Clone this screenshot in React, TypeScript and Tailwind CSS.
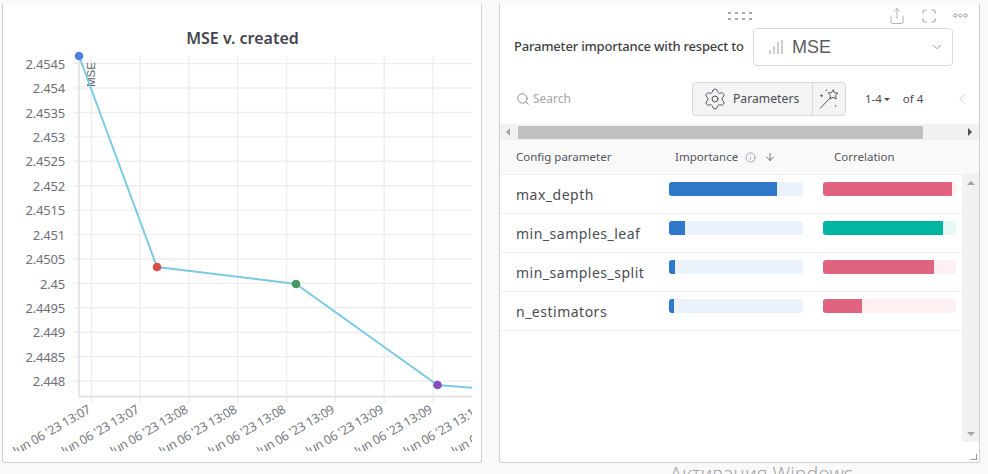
import { ArrowDown, ChevronDown, ChevronLeft, Info, Search, Settings, Share } from 'lucide-react'

const font = '"Noto Sans", sans-serif'

const yTicks = [
  '2.4545', '2.454', '2.4535', '2.453', '2.4525', '2.452', '2.4515',
  '2.451', '2.4505', '2.45', '2.4495', '2.449', '2.4485', '2.448',
]

const xTicks = [
  { x: 91.5, label: "Jun 06 '23 13:07" },
  { x: 140, label: "Jun 06 '23 13:07" },
  { x: 188.7, label: "Jun 06 '23 13:08" },
  { x: 237.6, label: "Jun 06 '23 13:08" },
  { x: 286.5, label: "Jun 06 '23 13:08" },
  { x: 335.3, label: "Jun 06 '23 13:09" },
  { x: 384.2, label: "Jun 06 '23 13:09" },
  { x: 433, label: "Jun 06 '23 13:09" },
  { x: 481.8, label: "Jun 06 '23 13:10" },
  { x: 530, label: "Jun 06 '23 13:10" },
]

const dots = [
  { x: 79, y: 56, fill: '#4f80e1' },
  { x: 157, y: 267, fill: '#da4c4c' },
  { x: 296, y: 284, fill: '#479a5f' },
  { x: 437.5, y: 385, fill: '#8150b8' },
]

const params = [
  { name: 'max_depth', imp: 108, corr: 129, tone: 'red' },
  { name: 'min_samples_leaf', imp: 16, corr: 120, tone: 'green' },
  { name: 'min_samples_split', imp: 6, corr: 111, tone: 'red' },
  { name: 'n_estimators', imp: 5, corr: 39, tone: 'red' },
]

function Chart() {
  return (
    <svg className="block w-[478px] h-[457px]" viewBox="3 4 478 457" style={{ fontFamily: font }}>
      <defs>
        <clipPath id="plot">
          <rect x="3" y="40" width="469" height="358" />
        </clipPath>
        <clipPath id="xlabels">
          <rect x="3" y="398" width="469" height="53" />
        </clipPath>
      </defs>
      <text x="242.5" y="43.5" textAnchor="middle" fontSize="16" fontWeight="600" fill="#45454d">
        MSE v. created
      </text>
      {yTicks.map((t, i) => {
        const y = 63.6 + i * 24.42
        return (
          <g key={t}>
            <line x1="73" x2="472" y1={y} y2={y} stroke="#eeeef0" strokeWidth="1.4" />
            <text x="65" y={y + 5.2} textAnchor="end" fontSize="13" letterSpacing="-0.2" fill="#6f6f78">
              {t}
            </text>
          </g>
        )
      })}
      {xTicks.slice(0, 8).map((t) => (
        <line key={t.x} x1={t.x} x2={t.x} y1="56" y2="403" stroke="#eeeef0" strokeWidth="1.4" />
      ))}
      <line x1="79" x2="79" y1="56" y2="397" stroke="#e4e4e6" strokeWidth="1.8" />
      <line x1="79" x2="472" y1="396.5" y2="396.5" stroke="#e4e4e6" strokeWidth="1.8" />
      <g clipPath="url(#xlabels)">
        {xTicks.map((t) => (
          <text
            key={t.x}
            x={t.x}
            y="412"
            textAnchor="end"
            fontSize="12.5"
            letterSpacing="-0.3"
            fill="#77777f"
            transform={`rotate(-30 ${t.x} 412)`}
          >
            {t.label}
          </text>
        ))}
      </g>
      <text
        x="95"
        y="87"
        fontSize="11.5"
        fill="#5f5f68"
        fontFamily="Liberation Sans, sans-serif"
        transform="rotate(-90 95 87)"
      >
        MSE
      </text>
      <g clipPath="url(#plot)">
        <polyline
          points="79,56 157,267 296,284 437.5,385 480,388.5"
          fill="none"
          stroke="#7ccbe4"
          strokeWidth="2"
        />
      </g>
      {dots.map((d) => (
        <circle key={d.x} cx={d.x} cy={d.y} r="4.3" fill={d.fill} />
      ))}
    </svg>
  )
}

function BarsIcon() {
  return (
    <svg width="14" height="16" viewBox="0 0 14 16" stroke="#a9a9ae" strokeWidth="1.2">
      <line x1="1" x2="1" y1="11" y2="15" />
      <line x1="5" x2="5" y1="7" y2="15" />
      <line x1="9" x2="9" y1="3" y2="15" />
      <line x1="13" x2="13" y1="1" y2="15" />
    </svg>
  )
}

function CornersIcon() {
  return (
    <svg width="14" height="14" viewBox="0 0 14 14" fill="none" stroke="#a9a9ad" strokeWidth="1.2">
      <path d="M1 4.5V2.5Q1 1 2.5 1H4.5M9.5 1H11.5Q13 1 13 2.5V4.5M13 9.5V11.5Q13 13 11.5 13H9.5M4.5 13H2.5Q1 13 1 11.5V9.5" />
    </svg>
  )
}

function DotsIcon() {
  return (
    <svg width="15" height="5" viewBox="0 0 15 5" fill="none" stroke="#8e8e92" strokeWidth="0.9">
      <circle cx="2.3" cy="2.5" r="1.6" />
      <circle cx="7.5" cy="2.5" r="1.6" />
      <circle cx="12.7" cy="2.5" r="1.6" />
    </svg>
  )
}

function WandIcon() {
  return (
    <svg width="22" height="22" viewBox="0 0 20 20" fill="none" stroke="#56565c" strokeWidth="0.9">
      <path d="M14 1.5L14.8 4.3L18 4.6L15.8 6.8L16.6 10L13.6 8.5L10.9 10L11.3 6.7L9.2 4.5L12.3 4.2Z" />
      <path d="M11 9L2 18.5" />
      <path d="M2 7H4.4M3.2 5.8V8.2M7.6 1.4V2.8M16 15.6V17" strokeWidth="0.9" />
    </svg>
  )
}

function DragHandle() {
  return (
    <div className="grid grid-cols-4 gap-x-[4px] gap-y-[4px] w-[24px]">
      {Array.from({ length: 8 }).map((_, i) => (
        <span key={i} className="w-[3px] h-[2px] bg-[#a9a9ad]" />
      ))}
    </div>
  )
}

function ImportanceBar({ width }: { width: number }) {
  return (
    <div className="w-[134px] h-[14px] rounded-[3px] bg-[#ebf2fb] overflow-hidden">
      <div className="h-full bg-[#2f77c8]" style={{ width }} />
    </div>
  )
}

function CorrelationBar({ width, tone }: { width: number; tone: string }) {
  return (
    <div className={`w-[133px] h-[14px] rounded-[3px] overflow-hidden ${tone === 'green' ? 'bg-[#e6f8f5]' : 'bg-[#fcf0f2]'}`}>
      <div className={`h-full ${tone === 'green' ? 'bg-[#00b6a0]' : 'bg-[#e0647f]'}`} style={{ width }} />
    </div>
  )
}

function ImportancePanel() {
  return (
    <div className="relative w-[481px] h-[459px] bg-white border-x border-b border-[#d0d0d0] rounded-b-[3px] flex flex-col">
      <div className="h-[24px] flex items-start">
        <div className="ml-[228px] mt-[8px]">
          <DragHandle />
        </div>
        <div className="ml-[136px] mt-[3px]">
          <Share size={18} strokeWidth={1.2} color="#a9a9ad" />
        </div>
        <div className="ml-[16px] mt-[5px]">
          <CornersIcon />
        </div>
        <div className="ml-[17px] mt-[9px]">
          <DotsIcon />
        </div>
      </div>
      <div className="flex items-center h-[37px] pl-[14px]">
        <span className="w-[239px] text-[13px] font-medium text-[#3f3f46] whitespace-nowrap tracking-[-0.2px]">
          Parameter importance with respect to
        </span>
        <div className="w-[200px] h-[38px] flex items-center pl-[15px] pr-[8px] border border-[#dcdcdc] rounded-[4px]">
          <BarsIcon />
          <span className="ml-[9px] pt-[2px] flex-1 text-[18px] text-[#5c5c64] font-['Liberation_Sans',sans-serif]">MSE</span>
          <ChevronDown size={14} strokeWidth={1.2} color="#6f6f76" />
        </div>
      </div>
      <div className="flex items-center h-[34px] mt-[17px] pl-[16px]">
        <Search size={14} strokeWidth={1.3} color="#6f6f76" />
        <span className="ml-[3px] w-[159px] text-[12px] text-[#a5a5aa]">Search</span>
        <div className="flex w-[154px] h-[34px] bg-[#f4f4f4] border border-[#d8d8d8] rounded-[4px]">
          <div className="w-[120px] flex items-center pl-[10px] border-r border-[#d8d8d8]">
            <Settings size={24} strokeWidth={1} color="#56565c" />
            <span className="ml-[6px] text-[12.2px] text-[#4c4c52]">Parameters</span>
          </div>
          <div className="flex-1 flex items-center justify-center">
            <WandIcon />
          </div>
        </div>
        <span className="ml-[19px] text-[11.5px] text-[#4c4c52]">1-4</span>
        <span className="ml-[2px] w-0 h-0 border-x-[3px] border-x-transparent border-t-[3px] border-t-[#4c4c52]" />
        <span className="ml-[13px] text-[11.5px] text-[#4c4c52]">of 4</span>
        <div className="ml-[30px]">
          <ChevronLeft size={18} strokeWidth={1.2} color="#c8c8cc" />
        </div>
      </div>
      <div className="mt-[8px] h-[16px] bg-[#f1f1f1] flex items-center">
        <span className="ml-[6px] w-0 h-0 border-y-[4px] border-y-transparent border-r-[4px] border-r-[#a3a3a3]" />
        <div className="ml-[8px] w-[405px] h-[13px] bg-[#c1c1c1]" />
        <span className="ml-[45px] w-0 h-0 border-y-[4px] border-y-transparent border-l-[4px] border-l-[#505050]" />
      </div>
      <div className="h-[35px] bg-[#f9f9f9] border-b border-[#efefef] flex items-center text-[11.5px] text-[#55555c]">
        <span className="ml-[16px] w-[159px]">Config parameter</span>
        <span className="w-[62px]">Importance</span>
        <Info size={11} strokeWidth={1.2} color="#6f6f76" className="ml-[8px]" />
        <ArrowDown size={12} strokeWidth={1.6} color="#55555c" className="ml-[8px]" />
        <span className="ml-[58px]">Correlation</span>
      </div>
      <div className="flex flex-1 pb-[20px]">
        <div className="flex-1">
          {params.map((p) => (
            <div key={p.name} className="h-[39px] flex items-start border-b border-[#f0f0f0]">
              <span className="ml-[16px] w-[153px] mt-[10px] text-[14px] leading-[20px] text-[#4c4c52] tracking-[0.5px] whitespace-nowrap">
                {p.name}
              </span>
              <div className="mt-[7px]">
                <ImportanceBar width={p.imp} />
              </div>
              <div className="ml-[20px] mt-[7px]">
                <CorrelationBar width={p.corr} tone={p.tone} />
              </div>
            </div>
          ))}
        </div>
        <div className="w-[17px] bg-[#f1f1f1] flex flex-col items-center justify-between py-[6px]">
          <span className="w-0 h-0 border-x-[4px] border-x-transparent border-b-[4px] border-b-[#a3a3a3]" />
          <span className="w-0 h-0 border-x-[4px] border-x-transparent border-t-[4px] border-t-[#a3a3a3]" />
        </div>
      </div>
      <span className="absolute right-[2px] bottom-[2px] w-[6px] h-[6px] border-r border-b border-[#9a9a9a]" />
    </div>
  )
}

export default function App() {
  return (
    <div className="relative w-[988px] h-[474px] overflow-hidden bg-[#f9f9f9] pt-[4px] pl-[2px]" style={{ fontFamily: font }}>
      <div className="flex items-start gap-[17px]">
        <div className="w-[480px] h-[459px] bg-white border-x border-b border-[#d0d0d0] rounded-b-[3px]">
          <Chart />
        </div>
        <ImportancePanel />
      </div>
      <span className="absolute left-[670px] top-[459px] text-[19.6px] font-light text-[#a6a6a6] whitespace-nowrap">
        Активация Windows
      </span>
    </div>
  )
}
